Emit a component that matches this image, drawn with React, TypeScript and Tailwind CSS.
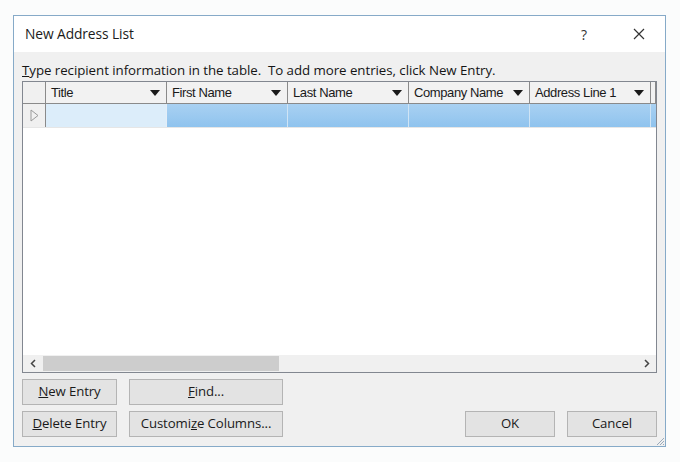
import React from "react";

const cols = ["Title", "First Name", "Last Name", "Company Name", "Address Line 1"];

function Arrow() {
  return (
    <svg width="10" height="6" viewBox="0 0 10 6" className="shrink-0">
      <path d="M0 0 H10 L5 6 Z" fill="#1a1a1a" />
    </svg>
  );
}

function Btn({ children, w }: { children: React.ReactNode; w: string }) {
  return (
    <div
      className={`${w} h-[26px] flex items-center justify-center border border-[#b4b4b4] bg-[#e3e3e3] text-[13.2px] text-[#1a1a1a] tracking-[-0.1px]`}
    >
      {children}
    </div>
  );
}

export default function App() {
  return (
    <div
      className="w-[680px] h-[462px] bg-[#fbfcfc] pt-[15px] pl-[13px]"
      style={{ fontFamily: '"Open Sans", "Noto Sans", sans-serif' }}
    >
      <div className="w-[653px] h-[432px] border border-[#86aac8] flex flex-col bg-[#f0f0f0]">
        {/* title bar */}
        <div className="h-[36px] bg-white flex items-center pl-[11px] pr-[20px] shrink-0">
          <span className="text-[13.8px] text-[#1b1b1b] tracking-[-0.1px]">New Address List</span>
          <span className="ml-auto text-[14px] text-[#333] mr-[46px]">?</span>
          <svg width="12" height="12" viewBox="0 0 12 12">
            <path d="M1 1 L11 11 M11 1 L1 11" stroke="#333" strokeWidth="1.2" />
          </svg>
        </div>
        {/* body */}
        <div className="flex-1 flex flex-col px-[8px] pt-[10px] relative">
          <div className="h-[16px] leading-[16px] text-[13.3px] text-[#151515] whitespace-nowrap tracking-[-0.05px]">
            <span className="underline">T</span>ype recipient information in the table.&nbsp; To add more entries, click New Entry.
          </div>
          {/* grid */}
          <div className="mt-[3px] h-[292px] border border-[#828790] bg-white flex flex-col">
            <div
              className="h-[22px] flex border-b border-[#8a8a8a] bg-[#f2f2f2] shrink-0"
              style={{ fontFamily: '"Liberation Sans", Arial, sans-serif' }}
            >
              <div className="w-[23px] border-r border-[#8a8a8a] bg-[#f0f0f0]" />
              {cols.map((c) => (
                <div
                  key={c}
                  className="w-[121px] border-r border-[#8a8a8a] flex items-center pl-[5px] pr-[6px] text-[13px] text-[#1a1a1a] tracking-[-0.4px]"
                >
                  <span className="flex-1 whitespace-nowrap">{c}</span>
                  <Arrow />
                </div>
              ))}
              <div className="flex-1 border-r border-[#8a8a8a]" />
            </div>
            <div className="h-[24px] flex shrink-0 border-b border-[#e6e6e6]">
              <div className="w-[23px] border-r border-[#8a8a8a] bg-[#f0f0f0] flex items-center justify-center">
                <svg width="9" height="13" viewBox="0 0 9 13">
                  <path d="M1 1 L8 6.5 L1 12 Z" fill="none" stroke="#9a9a9a" strokeWidth="1" />
                </svg>
              </div>
              <div className="w-[121px] border-r border-[#e4eef7] bg-[#dcedfa]" />
              {cols.slice(1).map((c) => (
                <div
                  key={c}
                  className="w-[121px] border-r border-[#cfe4f5] bg-gradient-to-b from-[#a9d1f2] to-[#8fc3ee]"
                />
              ))}
              <div className="flex-1 bg-gradient-to-b from-[#a9d1f2] to-[#8fc3ee]" />
            </div>
            <div className="flex-1" />
            {/* scrollbar */}
            <div className="h-[17px] flex items-center bg-[#f0f0f0] shrink-0">
              <div className="w-[20px] flex items-center justify-center">
                <svg width="6" height="9" viewBox="0 0 6 9">
                  <path d="M5 1 L1.5 4.5 L5 8" fill="none" stroke="#444" strokeWidth="1.5" />
                </svg>
              </div>
              <div className="w-[236px] h-[15px] bg-[#cdcdcd]" />
              <div className="flex-1" />
              <div className="w-[18px] flex items-center justify-center">
                <svg width="6" height="9" viewBox="0 0 6 9">
                  <path d="M1 1 L4.5 4.5 L1 8" fill="none" stroke="#444" strokeWidth="1.5" />
                </svg>
              </div>
            </div>
          </div>
          {/* buttons */}
          <div className="mt-[6px] flex flex-col gap-[6px]">
            <div className="flex gap-[12px]">
              <Btn w="w-[95px]">
                <span>
                  <span className="underline">N</span>ew Entry
                </span>
              </Btn>
              <Btn w="w-[154px]">
                <span>
                  <span className="underline">F</span>ind...
                </span>
              </Btn>
            </div>
            <div className="flex gap-[12px]">
              <Btn w="w-[95px]">
                <span>
                  <span className="underline">D</span>elete Entry
                </span>
              </Btn>
              <Btn w="w-[154px]">
                <span>
                  Customi<span className="underline">z</span>e Columns...
                </span>
              </Btn>
              <div className="flex-1" />
              <Btn w="w-[90px]">OK</Btn>
              <Btn w="w-[90px]">Cancel</Btn>
            </div>
          </div>
          <svg width="10" height="10" viewBox="0 0 10 10" className="absolute right-0 bottom-0">
            <path d="M9 2 L2 9 M9 5 L5 9 M9 8 L8 9" stroke="#9ab" strokeWidth="1" />
          </svg>
        </div>
      </div>
    </div>
  );
}
